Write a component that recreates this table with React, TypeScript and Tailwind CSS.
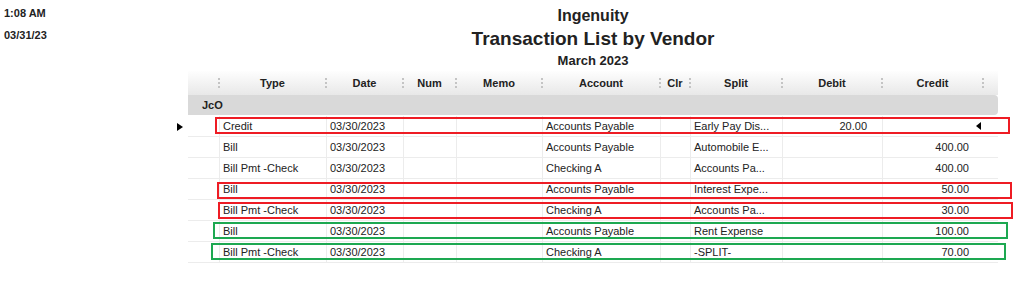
import React from "react";

const gridCols =
  "grid grid-cols-[32px_107px_77px_53px_86px_118px_30px_92px_100px_101px_14px]";

const headers = ["", "Type", "Date", "Num", "Memo", "Account", "Clr", "Split", "Debit", "Credit"];

type Row = {
  type: string;
  account: string;
  split: string;
  debit: string;
  credit: string;
  box: string;
  current?: boolean;
};

const rows: Row[] = [
  {
    type: "Credit",
    account: "Accounts Payable",
    split: "Early Pay Dis...",
    debit: "20.00",
    credit: "",
    box: "left-[27px] top-[1px] w-[795px] h-[17px] border-[#ee1c24]",
    current: true,
  },
  { type: "Bill", account: "Accounts Payable", split: "Automobile E...", debit: "", credit: "400.00", box: "" },
  { type: "Bill Pmt -Check", account: "Checking A", split: "Accounts Pa...", debit: "", credit: "400.00", box: "" },
  {
    type: "Bill",
    account: "Accounts Payable",
    split: "Interest Expe...",
    debit: "",
    credit: "50.00",
    box: "left-[29px] top-[3px] w-[795px] h-[17px] border-[#ee1c24]",
  },
  {
    type: "Bill Pmt -Check",
    account: "Checking A",
    split: "Accounts Pa...",
    debit: "",
    credit: "30.00",
    box: "left-[30px] top-[2px] w-[795px] h-[17px] border-[#ee1c24]",
  },
  {
    type: "Bill",
    account: "Accounts Payable",
    split: "Rent Expense",
    debit: "",
    credit: "100.00",
    box: "left-[25px] top-[1px] w-[795px] h-[17px] border-[#1da851]",
  },
  {
    type: "Bill Pmt -Check",
    account: "Checking A",
    split: "-SPLIT-",
    debit: "",
    credit: "70.00",
    box: "left-[23px] top-[1px] w-[795px] h-[17px] border-[#1da851]",
  },
];

const cell = "border-r border-[#ececec] pl-[3px] flex items-center whitespace-nowrap overflow-hidden";

const DataRow = ({ row }: { row: Row }) => (
  <div className={`${gridCols} relative h-[21px] border-b border-[#ececec]`}>
    {row.current && (
      <span className="absolute -left-[11px] top-[7px] w-0 h-0 border-y-[4px] border-y-transparent border-l-[6px] border-l-black" />
    )}
    <div className="border-r border-[#ececec]" />
    <div className={cell}>{row.type}</div>
    <div className={cell}>03/30/2023</div>
    <div className={cell}></div>
    <div className={cell}></div>
    <div className={cell}>{row.account}</div>
    <div className={cell}></div>
    <div className={cell}>{row.split}</div>
    <div className="border-r border-[#ececec] pr-[15px] flex items-center justify-end">{row.debit}</div>
    <div className="pr-[15px] flex items-center justify-end">
      {row.current ? (
        <span className="mr-[-12px] w-0 h-0 border-y-[4px] border-y-transparent border-r-[5px] border-r-black" />
      ) : (
        row.credit
      )}
    </div>
    <div />
    {row.box && <div className={`absolute border-2 pointer-events-none ${row.box}`} />}
  </div>
);

export default function App() {
  return (
    <div
      className="w-[1022px] h-[286px] bg-white text-[#222] flex"
      style={{ fontFamily: '"Liberation Sans", Arial, sans-serif' }}
    >
      <div className="w-[188px] shrink-0 pl-[4px] pt-[6px] text-[11px] leading-[14px] font-bold">
        <div>1:08 AM</div>
        <div className="mt-[8px]">03/31/23</div>
      </div>

      <div className="w-[810px] shrink-0">
        <div className="pt-[7px] text-center font-bold">
          <div className="text-[16px] leading-[18px]">Ingenuity</div>
          <div className="mt-[3px] text-[19px] leading-[22px]">Transaction List by Vendor</div>
          <div className="mt-[3px] text-[13px] leading-[16px]">March 2023</div>
        </div>

        <div className="mt-[2px] text-[11px]">
          <div className={`${gridCols} h-[24px] bg-linear-to-b from-[#fefefe] to-[#e8e8e8] font-bold`}>
            {headers.map((h, i) => (
              <div key={i} className="flex items-center">
                <span className="flex-1 text-center">{h}</span>
                <span className="h-[10px] border-r-2 border-dotted border-[#c4c4c4]" />
              </div>
            ))}
            <div />
          </div>

          <div className="h-[20px] mb-[1px] bg-[#d9d9d9] rounded-r-[4px] pl-[14px] flex items-center font-bold">
            JcO
          </div>

          {rows.map((r, i) => (
            <DataRow key={i} row={r} />
          ))}
        </div>
      </div>
    </div>
  );
}
